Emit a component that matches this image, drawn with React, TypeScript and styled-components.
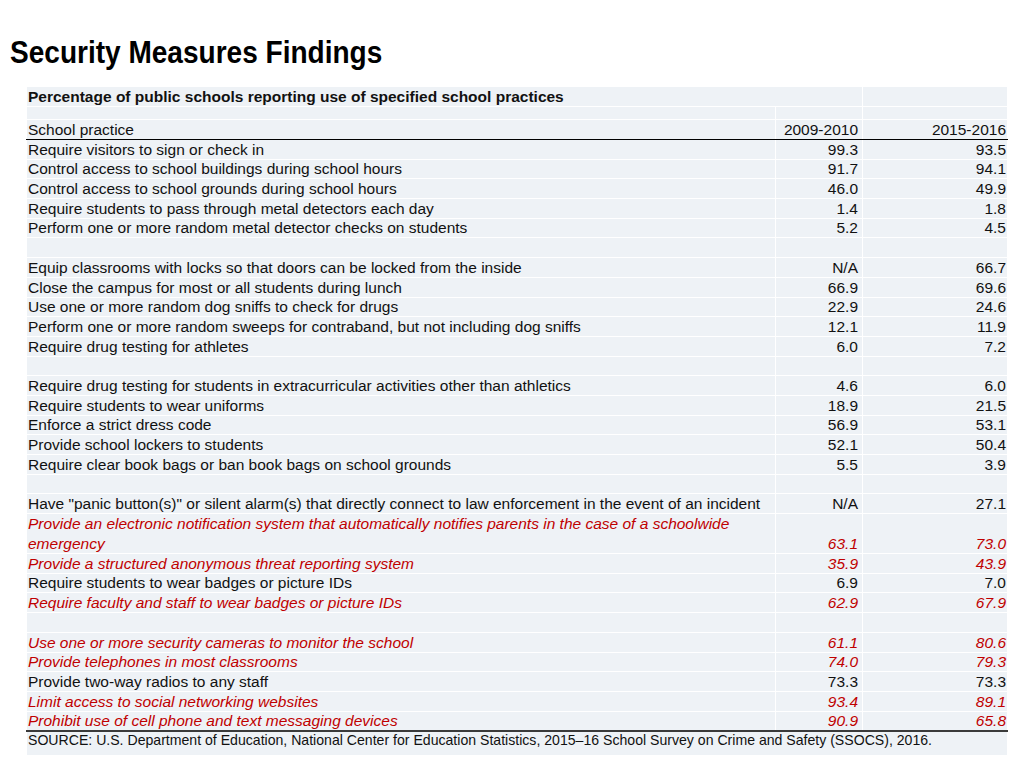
import React from "react";
import styled, { createGlobalStyle } from "styled-components";

const GlobalStyle = createGlobalStyle`
  html, body { margin: 0; padding: 0; background: #ffffff; }
  body { font-family: "Liberation Sans", Arial, sans-serif; color: #111; }
`;

const Page = styled.div`
  width: 1024px;
  height: 768px;
  box-sizing: border-box;
  padding: 32px 17px 0 26px;
`;

const Title = styled.h1`
  margin: 0 0 14px -16px;
  font-family: "Liberation Sans", Arial, sans-serif;
  font-weight: 700;
  font-size: 32px;
  line-height: 40px;
  color: #000;
  white-space: nowrap;
  transform: scaleX(0.876);
  transform-origin: left center;
`;

const Table = styled.table`
  width: 981px;
  border-collapse: collapse;
  table-layout: fixed;
  font-size: 15.5px;
`;

const Cell = styled.td<{ $align?: "left" | "right"; $red?: boolean; $pr?: number }>`
  background: #eef2f6;
  border: 1px solid #ffffff;
  padding: 0 ${(p) => p.$pr ?? 1}px 1px 1px;
  text-align: ${(p) => p.$align ?? "left"};
  vertical-align: bottom;
  line-height: 17px;
  white-space: nowrap;
  color: ${(p) => (p.$red ? "#c00000" : "#111")};
  font-style: ${(p) => (p.$red ? "italic" : "normal")};
`;

const WrapCell = styled(Cell)`
  white-space: normal;
  line-height: 19.5px;
  padding-bottom: 0;
`;

const CaptionCell = styled(Cell)`
  font-weight: 700;
`;

const Row = styled.tr<{ $h?: number }>`
  height: ${(p) => p.$h ?? 19.7}px;
`;

const HeaderRow = styled.tr`
  height: 20px;
  td {
    border-bottom: 1.5px solid #000;
  }
`;

const LastRow = styled.tr`
  height: 19.7px;
  td {
    border-bottom: 2px solid #3a3a3a;
  }
`;

const SourceCell = styled(Cell)`
  font-size: 14.1px;
  height: 22px;
  vertical-align: top;
  line-height: 16px;
`;

type Item = { label: string; a: string; b: string; red?: boolean; wrap?: boolean };

const groups: Item[][] = [
  [
    { label: "Require visitors to sign or check in", a: "99.3", b: "93.5" },
    { label: "Control access to school buildings during school hours", a: "91.7", b: "94.1" },
    { label: "Control access to school grounds during school hours", a: "46.0", b: "49.9" },
    { label: "Require students to pass through metal detectors each day", a: "1.4", b: "1.8" },
    { label: "Perform one or more random metal detector checks on students", a: "5.2", b: "4.5" },
  ],
  [
    { label: "Equip classrooms with locks so that doors can be locked from the inside", a: "N/A", b: "66.7" },
    { label: "Close the campus for most or all students during lunch", a: "66.9", b: "69.6" },
    { label: "Use one or more random dog sniffs to check for drugs", a: "22.9", b: "24.6" },
    { label: "Perform one or more random sweeps for contraband, but not including dog sniffs", a: "12.1", b: "11.9" },
    { label: "Require drug testing for athletes", a: "6.0", b: "7.2" },
  ],
  [
    { label: "Require drug testing for students in extracurricular activities other than athletics", a: "4.6", b: "6.0" },
    { label: "Require students to wear uniforms", a: "18.9", b: "21.5" },
    { label: "Enforce a strict dress code", a: "56.9", b: "53.1" },
    { label: "Provide school lockers to students", a: "52.1", b: "50.4" },
    { label: "Require clear book bags or ban book bags on school grounds", a: "5.5", b: "3.9" },
  ],
  [
    { label: "Have \"panic button(s)\" or silent alarm(s) that directly connect to law enforcement in the event of an incident", a: "N/A", b: "27.1" },
    { label: "Provide an electronic notification system that automatically notifies parents in the case of a schoolwide emergency", a: "63.1", b: "73.0", red: true, wrap: true },
    { label: "Provide a structured anonymous threat reporting system", a: "35.9", b: "43.9", red: true },
    { label: "Require students to wear badges or picture IDs", a: "6.9", b: "7.0" },
    { label: "Require faculty and staff to wear badges or picture IDs", a: "62.9", b: "67.9", red: true },
  ],
  [
    { label: "Use one or more security cameras to monitor the school", a: "61.1", b: "80.6", red: true },
    { label: "Provide telephones in most classrooms", a: "74.0", b: "79.3", red: true },
    { label: "Provide two-way radios to any staff", a: "73.3", b: "73.3" },
    { label: "Limit access to social networking websites", a: "93.4", b: "89.1", red: true },
    { label: "Prohibit use of cell phone and text messaging devices", a: "90.9", b: "65.8", red: true },
  ],
];

function ItemRow({ item, last }: { item: Item; last: boolean }) {
  const Label = item.wrap ? WrapCell : Cell;
  const cells = (
    <>
      <Label $red={item.red}>{item.label}</Label>
      <Cell $align="right" $pr={4} $red={item.red}>{item.a}</Cell>
      <Cell $align="right" $red={item.red}>{item.b}</Cell>
    </>
  );
  if (last) return <LastRow>{cells}</LastRow>;
  return <Row $h={item.wrap ? 39.4 : 19.7}>{cells}</Row>;
}

export default function App() {
  return (
    <>
      <GlobalStyle />
      <Page>
        <Title>Security Measures Findings</Title>
        <Table>
          <colgroup>
            <col style={{ width: 749 }} />
            <col style={{ width: 87 }} />
            <col style={{ width: 145 }} />
          </colgroup>
          <tbody>
            <Row $h={20}>
              <CaptionCell colSpan={2}>Percentage of public schools reporting use of specified school practices</CaptionCell>
              <Cell />
            </Row>
            <Row $h={13}>
              <Cell />
              <Cell />
              <Cell />
            </Row>
            <HeaderRow>
              <Cell>School practice</Cell>
              <Cell $align="right" $pr={4}>2009-2010</Cell>
              <Cell $align="right">2015-2016</Cell>
            </HeaderRow>
            {groups.map((g, gi) => (
              <React.Fragment key={gi}>
                {gi > 0 && (
                  <Row>
                    <Cell />
                    <Cell />
                    <Cell />
                  </Row>
                )}
                {g.map((item, ii) => (
                  <ItemRow key={ii} item={item} last={gi === groups.length - 1 && ii === g.length - 1} />
                ))}
              </React.Fragment>
            ))}
            <tr>
              <SourceCell colSpan={3}>
                SOURCE: U.S. Department of Education, National Center for Education Statistics, 2015–16 School Survey on Crime and Safety (SSOCS), 2016.
              </SourceCell>
            </tr>
          </tbody>
        </Table>
      </Page>
    </>
  );
}
